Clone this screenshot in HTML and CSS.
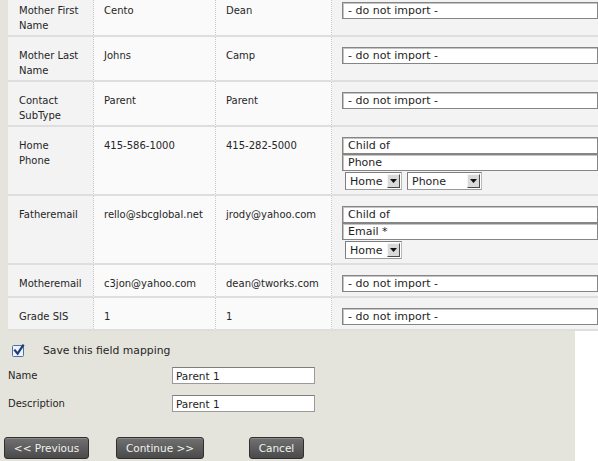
FILE: index.html
```html
<!DOCTYPE html>
<html>
<head>
<meta charset="utf-8">
<link rel="stylesheet" href="styles.css">
</head>
<body>
<div class="panel">
  <table class="map">
    <tr>
      <th class="c1">Mother First Name</th>
      <td class="c2">Cento</td>
      <td class="c3">Dean</td>
      <td class="pick"><div class="sel">- do not import -</div></td>
    </tr>
    <tr>
      <th class="c1">Mother Last Name</th>
      <td class="c2">Johns</td>
      <td class="c3">Camp</td>
      <td class="pick"><div class="sel">- do not import -</div></td>
    </tr>
    <tr>
      <th class="c1">Contact SubType</th>
      <td class="c2">Parent</td>
      <td class="c3">Parent</td>
      <td class="pick"><div class="sel">- do not import -</div></td>
    </tr>
    <tr>
      <th class="c1">Home<br>Phone</th>
      <td class="c2">415-586-1000</td>
      <td class="c3">415-282-5000</td>
      <td class="pick">
        <div class="sel">Child of</div>
        <div class="sel">Phone</div>
        <div class="minis">
          <div class="mini mini-short"><span class="mini-text">Home</span><span class="mini-btn"><svg width="7" height="4" viewBox="0 0 7 4"><path d="M0 0H7L3.5 4Z" fill="#111"/></svg></span></div>
          <div class="mini mini-long"><span class="mini-text">Phone</span><span class="mini-btn"><svg width="7" height="4" viewBox="0 0 7 4"><path d="M0 0H7L3.5 4Z" fill="#111"/></svg></span></div>
        </div>
      </td>
    </tr>
    <tr>
      <th class="c1">Fatheremail</th>
      <td class="c2">rello@sbcglobal.net</td>
      <td class="c3">jrody@yahoo.com</td>
      <td class="pick">
        <div class="sel">Child of</div>
        <div class="sel">Email *</div>
        <div class="minis">
          <div class="mini mini-short"><span class="mini-text">Home</span><span class="mini-btn"><svg width="7" height="4" viewBox="0 0 7 4"><path d="M0 0H7L3.5 4Z" fill="#111"/></svg></span></div>
        </div>
      </td>
    </tr>
    <tr>
      <th class="c1">Motheremail</th>
      <td class="c2">c3jon@yahoo.com</td>
      <td class="c3">dean@tworks.com</td>
      <td class="pick"><div class="sel">- do not import -</div></td>
    </tr>
    <tr>
      <th class="c1">Grade SIS</th>
      <td class="c2">1</td>
      <td class="c3">1</td>
      <td class="pick"><div class="sel">- do not import -</div></td>
    </tr>
  </table>

  <div class="save">
    <svg class="check" width="13" height="13" viewBox="0 0 13 13">
      <rect x="0.5" y="1.5" width="11" height="11" rx="1" fill="#eef3fa" stroke="#4d6fa8"/>
      <path d="M3 6.5L5.6 9.6L11 1.5" fill="none" stroke="#1f3c7a" stroke-width="2.2" stroke-linecap="square"/>
    </svg>
    <span class="save-label">Save this field mapping</span>
  </div>

  <div class="field field-name">
    <label class="field-label">Name</label>
    <input class="txt" type="text" value="Parent 1">
  </div>
  <div class="field field-desc">
    <label class="field-label">Description</label>
    <input class="txt" type="text" value="Parent 1">
  </div>

  <div class="actions">
    <button class="btn btn-prev">&lt;&lt; Previous</button>
    <button class="btn btn-next">Continue &gt;&gt;</button>
    <button class="btn btn-cancel">Cancel</button>
  </div>
</div>
</body>
</html>
```

FILE: styles.css
```css
html, body {
  margin: 0;
  padding: 0;
  overflow: hidden;
  background: #ffffff;
}

body {
  font-family: "DejaVu Sans", Verdana, sans-serif;
  color: #262626;
}

.panel {
  width: 575px;
  height: 480px;
  background: #e5e4dc;
}

.map {
  border-collapse: separate;
  border-spacing: 0;
  table-layout: fixed;
  width: 610px;
  margin: -8px 0 0 8px;
  font-size: 10px;
  line-height: 15px;
}

.map th,
.map td {
  box-sizing: border-box;
  vertical-align: baseline;
  text-align: left;
  font-weight: normal;
  padding: 10px 8px 2px 10px;
  border-bottom: 2px solid #dedede;
  color: #262626;
}

.map .c1 {
  width: 86px;
  padding-left: 11px;
  background: #f3f3f3;
  border-right: 1px dotted #c8c8c8;
}

.map .c2 {
  width: 122px;
  background: #fafafa;
  border-right: 1px dotted #c8c8c8;
}

.map .c3 {
  width: 116px;
  background: #fafafa;
  border-right: 1px dotted #c8c8c8;
}

.map .pick {
  background: #f3f3f3;
  padding-bottom: 4px;
}

.sel {
  box-sizing: border-box;
  width: 256px;
  height: 17px;
  border: 1px solid #858585;
  box-shadow: inset 1px 1px 0 #c4c4c4;
  background: #ffffff;
  font-size: 11px;
  line-height: 15px;
  padding: 0 5px;
  color: #1e1e1e;
  white-space: nowrap;
}

.minis {
  display: flex;
  gap: 5px;
  margin: 1px 0 0 3px;
}

.mini {
  box-sizing: border-box;
  display: flex;
  align-items: center;
  justify-content: space-between;
  height: 18px;
  border: 1px solid;
  border-color: #7d7d7d #b9b9b9 #9a9a9a #7d7d7d;
  background: #ffffff;
  font-size: 11px;
  line-height: 15px;
  color: #1e1e1e;
}

.mini-short { width: 57px; }
.mini-long { width: 75px; }

.mini-text {
  padding-left: 4px;
}

.mini-btn {
  box-sizing: border-box;
  display: flex;
  align-items: center;
  justify-content: center;
  width: 13px;
  height: 14px;
  margin-right: 1px;
  background: #d9d9d9;
  border: 1px solid;
  border-color: #f4f4f4 #4a4a4a #4a4a4a #f4f4f4;
}

.save {
  display: flex;
  align-items: center;
  height: 13px;
  margin: 13px 0 0 12px;
  gap: 18px;
}

.check {
  display: block;
}

.save-label {
  font-size: 10.8px;
  line-height: 13px;
  color: #262626;
}

.field {
  display: grid;
  grid-template-columns: 164px 143px;
  align-items: center;
  margin-left: 8px;
  height: 17px;
}

.field-name { margin-top: 10px; }
.field-desc { margin-top: 11px; }

.field-label {
  font-size: 10px;
  color: #262626;
}

.txt {
  box-sizing: border-box;
  width: 143px;
  height: 17px;
  margin: 0;
  padding: 0 3px;
  border: 1px solid #9a9a9a;
  border-top-color: #7f7f7f;
  background: #ffffff;
  font-family: "DejaVu Sans", Verdana, sans-serif;
  font-size: 10.5px;
  color: #1e1e1e;
  outline: none;
}

.actions {
  display: flex;
  margin: 25px 0 0 4px;
}

.btn {
  box-sizing: border-box;
  height: 22px;
  margin: 0;
  padding: 0;
  border: 1px solid #2f2f2f;
  border-radius: 3px;
  background: linear-gradient(#717171, #4a4a4a);
  box-shadow: inset 0 1px 0 #8a8a8a;
  color: #f2f2f2;
  font-family: "DejaVu Sans", Verdana, sans-serif;
  font-size: 10.5px;
  line-height: 20px;
  text-align: center;
}

.btn-prev { width: 85px; }
.btn-next { width: 88px; margin-left: 27px; }
.btn-cancel { width: 55px; margin-left: 45px; }
```
